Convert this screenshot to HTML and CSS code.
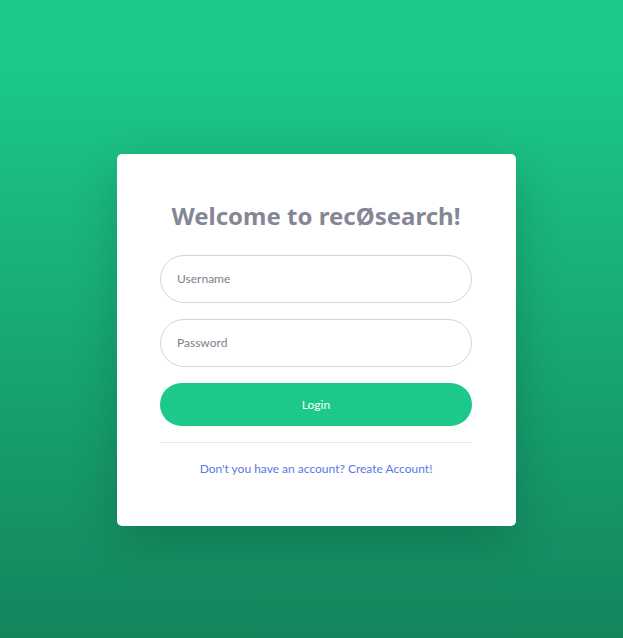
FILE: index.html
```html
<!DOCTYPE html>
<html lang="en">
<head>
<meta charset="utf-8">
<title>Login</title>
<link rel="stylesheet" href="styles.css">
</head>
<body>
<div class="page">
  <div class="card">
    <h1 class="title">Welcome to recØsearch!</h1>
    <form class="form">
      <input class="field" type="text" placeholder="Username">
      <input class="field" type="password" placeholder="Password">
      <button class="btn" type="button">Login</button>
    </form>
    <hr class="divider">
    <div class="footer"><a class="link" href="#">Don't you have an account? Create Account!</a></div>
  </div>
</div>
</body>
</html>
```

FILE: styles.css
```css
html, body {
  margin: 0;
  padding: 0;
}
body {
  min-height: 638px;
  background-color: #1cc88a;
  background-image: linear-gradient(180deg, #1cc88a 10%, #13855c 100%);
  font-family: "Lato", "Noto Sans", sans-serif;
}
.page {
  display: flex;
  justify-content: center;
  padding-top: 154px;
  padding-left: 9px;
}
.card {
  box-sizing: border-box;
  width: 399px;
  background: #fff;
  border-radius: 5px;
  padding: 48px 43.5px 48px;
  box-shadow: 0 16px 48px rgba(0, 0, 0, 0.175);
}
.title {
  margin: 0 0 24px;
  text-align: center;
  font-family: "Noto Sans", sans-serif;
  font-size: 24px;
  line-height: 28.8px;
  font-weight: 700;
  color: #858796;
}
.form {
  display: flex;
  flex-direction: column;
  gap: 16px;
  margin: 0;
}
.field {
  box-sizing: border-box;
  width: 100%;
  height: 48px;
  border: 1px solid #d1d3e2;
  border-radius: 160px;
  padding: 0 16px;
  font-family: inherit;
  font-size: 12px;
  color: #6e707e;
  background: #fff;
  outline: none;
}
.field::placeholder {
  color: #7d7f8c;
}
.btn {
  height: 43px;
  width: 100%;
  border: none;
  border-radius: 160px;
  background: #1cc88a;
  color: #fff;
  font-family: inherit;
  font-size: 12px;
  cursor: pointer;
}
.divider {
  margin: 16px 0;
  border: 0;
  border-top: 1px solid #e3e6f0;
}
.footer {
  text-align: center;
  font-size: 12px;
  line-height: 19px;
}
.link {
  color: #5a78df;
  text-decoration: none;
}
```
